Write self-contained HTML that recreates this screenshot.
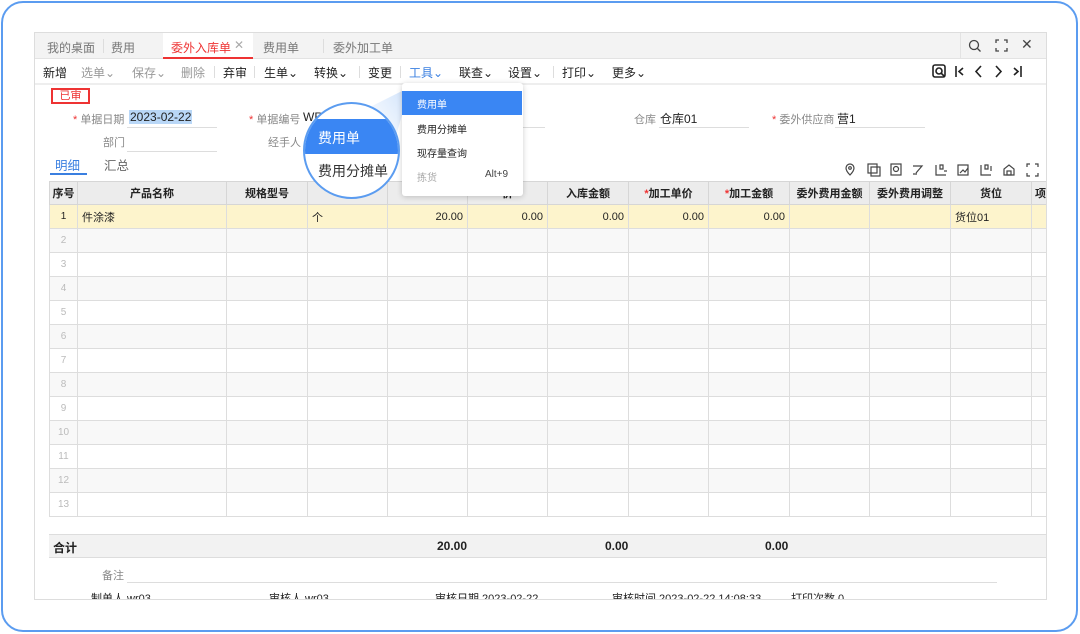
<!DOCTYPE html>
<html><head><meta charset="utf-8"><style>
*{margin:0;padding:0;box-sizing:border-box}
body{width:1080px;height:634px;background:#fff;font-family:"Liberation Sans","Noto Sans CJK SC",sans-serif;font-size:12px;color:#222;position:relative;overflow:hidden}
.a{position:absolute;white-space:nowrap}
.frame{position:absolute;left:1px;top:1px;width:1077px;height:631px;border:2px solid #5b9cf0;border-radius:22px}
.panel{position:absolute;left:34px;top:32px;width:1013px;height:568px;border:1px solid #ddd;background:#fff;overflow:hidden}
.g{color:#999}
.lbl{color:#888;font-size:11px}
.line{position:absolute;height:1px;background:#ddd}
table{border-collapse:collapse;position:absolute;left:14px;top:148px;table-layout:fixed;width:1000px}
td{border:1px solid #ddd;height:24px;font-size:11px;padding:0 4px;overflow:hidden;white-space:nowrap}
tr.h td{background:#ececec;font-weight:bold;text-align:center;height:23px;border-color:#d6d6d6}
tr.y td{background:#fdf4cc}
td.n{text-align:center;color:#bbb;font-size:10px}
td.r{text-align:right}
tr.e td{background:#f8f8f8}
.red{color:#e33}
</style></head><body>
<div class="frame"></div>
<div class="panel">
 <div class="a" style="left:0;top:0;width:1013px;height:26px;background:#f3f3f3;border-bottom:1px solid #e3e3e3"></div>
 <div class="a" style="left:12px;top:6px;color:#777">我的桌面</div>
 <div class="a" style="left:68px;top:6px;width:1px;height:14px;background:#ddd"></div>
 <div class="a" style="left:76px;top:6px;color:#777">费用</div>
 <div class="a" style="left:128px;top:0;width:90px;height:26px;background:#fff;border-bottom:2px solid #e33"></div>
 <div class="a" style="left:136px;top:6px;color:#e33">委外入库单</div>
 <div class="a" style="left:199px;top:5px;color:#aaa">✕</div>
 <div class="a" style="left:228px;top:6px;color:#777">费用单</div>
 <div class="a" style="left:288px;top:6px;width:1px;height:14px;background:#ddd"></div>
 <div class="a" style="left:298px;top:6px;color:#777">委外加工单</div>
 <div class="a" style="left:925px;top:0;width:1px;height:26px;background:#e3e3e3"></div>
 <svg class="a" style="left:933px;top:6px" width="14" height="14"><circle cx="6" cy="6" r="4.5" fill="none" stroke="#444" stroke-width="1.3"/><line x1="9.5" y1="9.5" x2="12.5" y2="12.5" stroke="#444" stroke-width="1.3"/></svg>
 <svg class="a" style="left:960px;top:6px" width="13" height="13" fill="none" stroke="#444" stroke-width="1.3"><path d="M1 4V1h3M9 1h3v3M12 9v3H9M4 12H1V9"/></svg>
 <div class="a" style="left:986px;top:3px;font-size:14px;color:#444">✕</div>
 <div class="a" style="left:0;top:26px;width:1013px;height:26px;border-bottom:2px solid #eee"></div>
 <div class="a" style="left:8px;top:31px">新增</div>
 <div class="a g" style="left:46px;top:31px">选单⌄</div>
 <div class="a g" style="left:97px;top:31px">保存⌄</div>
 <div class="a g" style="left:146px;top:31px">删除</div>
 <div class="a" style="left:179px;top:33px;width:1px;height:12px;background:#ddd"></div>
 <div class="a" style="left:188px;top:31px">弃审</div>
 <div class="a" style="left:219px;top:33px;width:1px;height:12px;background:#ddd"></div>
 <div class="a" style="left:229px;top:31px">生单⌄</div>
 <div class="a" style="left:279px;top:31px">转换⌄</div>
 <div class="a" style="left:324px;top:33px;width:1px;height:12px;background:#ddd"></div>
 <div class="a" style="left:333px;top:31px">变更</div>
 <div class="a" style="left:365px;top:33px;width:1px;height:12px;background:#ddd"></div>
 <div class="a" style="left:374px;top:31px;color:#3a7fe0">工具⌄</div>
 <div class="a" style="left:424px;top:31px">联查⌄</div>
 <div class="a" style="left:473px;top:31px">设置⌄</div>
 <div class="a" style="left:518px;top:33px;width:1px;height:12px;background:#ddd"></div>
 <div class="a" style="left:527px;top:31px">打印⌄</div>
 <div class="a" style="left:577px;top:31px">更多⌄</div>
 <svg class="a" style="left:897px;top:31px" width="95" height="16" fill="none" stroke="#222" stroke-width="1.6"><rect x="1" y="1" width="12" height="12" rx="2"/><circle cx="7" cy="7" r="3"/><path d="M9 9l4 4"/><path d="M24 2v11M31 4l-4 3.5 4 3.5"/><path d="M49 2l-5 5.5 5 5.5"/><path d="M64 2l5 5.5-5 5.5"/><path d="M82 4l4 3.5-4 3.5M89 2v11"/></svg>
 <div class="a" style="left:16px;top:55px;width:39px;height:16px;border:2px solid #e33;color:#e33;font-size:11px;text-align:center;line-height:12px">已审</div>
 <div class="a lbl" style="left:38px;top:78px"><span class="red">*</span> 单据日期</div>
 <div class="a" style="left:94px;top:77px;background:#b9d7f7;padding:0 1px">2023-02-22</div>
 <div class="line" style="left:92px;top:94px;width:90px"></div>
 <div class="a lbl" style="left:214px;top:78px"><span class="red">*</span> 单据编号</div>
 <div class="a" style="left:268px;top:77px">WR</div>
 <div class="a lbl" style="left:599px;top:78px">仓库</div>
 <div class="a" style="left:625px;top:77px">仓库01</div>
 <div class="line" style="left:624px;top:94px;width:90px"></div>
 <div class="line" style="left:420px;top:94px;width:90px"></div>
 <div class="a lbl" style="left:737px;top:78px"><span class="red">*</span> 委外供应商</div>
 <div class="a" style="left:802px;top:77px">营1</div>
 <div class="line" style="left:800px;top:94px;width:90px"></div>
 <div class="a lbl" style="left:68px;top:101px">部门</div>
 <div class="line" style="left:92px;top:118px;width:90px"></div>
 <div class="a lbl" style="left:233px;top:101px">经手人</div>
 <div class="a" style="left:20px;top:122px;color:#3a7fe0;font-size:12.5px">明细</div>
 <div class="a" style="left:69px;top:122px;color:#666;font-size:12.5px">汇总</div>
 <div class="a" style="left:15px;top:140px;width:37px;height:2px;background:#3a7fe0"></div>
 <svg class="a" style="left:808px;top:130px" width="200" height="14" fill="none" stroke="#444" stroke-width="1.2"><path d="M7 12C3 8 3 6 3 5a4 4 0 018 0c0 1 0 3-4 7z"/><circle cx="7" cy="5" r="1.3"/><rect x="25" y="1" width="9" height="9"/><rect x="28" y="4" width="9" height="9"/><rect x="48" y="1" width="10" height="11"/><circle cx="53" cy="6" r="2.5"/><path d="M70 3h9l-6 7M70 11h4"/><path d="M93 2v10h10M97 2h3v4h-3zM101 8h3"/><rect x="115" y="2" width="10" height="10"/><path d="M117 10l3-3 2 2 3-4"/><path d="M138 2v10h10M142 2h3v4h-3zM148 3v5"/><path d="M161 12V6l5-4 5 4v6z"/><rect x="164" y="8" width="4" height="4"/><path d="M184 4V1h3M192 1h3v3M195 10v3h-3M187 13h-3v-3"/></svg>
 <table>
  <colgroup><col style="width:28px"><col style="width:149px"><col style="width:81px"><col style="width:80px"><col style="width:80px"><col style="width:80px"><col style="width:81px"><col style="width:80px"><col style="width:81px"><col style="width:80px"><col style="width:81px"><col style="width:81px"><col style="width:18px"></colgroup>
  <tr class="h"><td style="padding:0">序号</td><td>产品名称</td><td>规格型号</td><td>单</td><td></td><td>价</td><td>入库金额</td><td><span class="red">*</span>加工单价</td><td><span class="red">*</span>加工金额</td><td>委外费用金额</td><td>委外费用调整</td><td>货位</td><td style="padding:0">项</td></tr>
  <tr class="y"><td style="text-align:center;font-size:10px">1</td><td>件涂漆</td><td></td><td>个</td><td class="r">20.00</td><td class="r">0.00</td><td class="r">0.00</td><td class="r">0.00</td><td class="r">0.00</td><td></td><td></td><td>货位01</td><td></td></tr>
  <tr class="e"><td class="n">2</td><td></td><td></td><td></td><td></td><td></td><td></td><td></td><td></td><td></td><td></td><td></td><td></td></tr>
  <tr><td class="n">3</td><td></td><td></td><td></td><td></td><td></td><td></td><td></td><td></td><td></td><td></td><td></td><td></td></tr>
  <tr class="e"><td class="n">4</td><td></td><td></td><td></td><td></td><td></td><td></td><td></td><td></td><td></td><td></td><td></td><td></td></tr>
  <tr><td class="n">5</td><td></td><td></td><td></td><td></td><td></td><td></td><td></td><td></td><td></td><td></td><td></td><td></td></tr>
  <tr class="e"><td class="n">6</td><td></td><td></td><td></td><td></td><td></td><td></td><td></td><td></td><td></td><td></td><td></td><td></td></tr>
  <tr><td class="n">7</td><td></td><td></td><td></td><td></td><td></td><td></td><td></td><td></td><td></td><td></td><td></td><td></td></tr>
  <tr class="e"><td class="n">8</td><td></td><td></td><td></td><td></td><td></td><td></td><td></td><td></td><td></td><td></td><td></td><td></td></tr>
  <tr><td class="n">9</td><td></td><td></td><td></td><td></td><td></td><td></td><td></td><td></td><td></td><td></td><td></td><td></td></tr>
  <tr class="e"><td class="n">10</td><td></td><td></td><td></td><td></td><td></td><td></td><td></td><td></td><td></td><td></td><td></td><td></td></tr>
  <tr><td class="n">11</td><td></td><td></td><td></td><td></td><td></td><td></td><td></td><td></td><td></td><td></td><td></td><td></td></tr>
  <tr class="e"><td class="n">12</td><td></td><td></td><td></td><td></td><td></td><td></td><td></td><td></td><td></td><td></td><td></td><td></td></tr>
  <tr><td class="n">13</td><td></td><td></td><td></td><td></td><td></td><td></td><td></td><td></td><td></td><td></td><td></td><td></td></tr>
 </table>
 <div class="a" style="left:14px;top:501px;width:1000px;height:24px;background:#f2f2f2;border-top:1px solid #ddd;border-bottom:1px solid #ddd"></div>
 <div class="a" style="left:18px;top:506px;font-weight:bold">合计</div>
 <div class="a" style="left:402px;top:506px;font-weight:bold">20.00</div>
 <div class="a" style="left:570px;top:506px;font-weight:bold">0.00</div>
 <div class="a" style="left:730px;top:506px;font-weight:bold">0.00</div>
 <div class="a lbl" style="left:67px;top:534px">备注</div>
 <div class="line" style="left:92px;top:549px;width:870px"></div>
 <div class="a" style="left:56px;top:557px;font-size:11px">制单人 wr03</div>
 <div class="a" style="left:234px;top:557px;font-size:11px">审核人 wr03</div>
 <div class="a" style="left:400px;top:557px;font-size:11px">审核日期 2023-02-22</div>
 <div class="a" style="left:577px;top:557px;font-size:11px">审核时间 2023-02-22 14:08:33</div>
 <div class="a" style="left:756px;top:557px;font-size:11px">打印次数 0</div>
</div>
<svg class="a" style="left:0;top:0" width="1080" height="634"><defs><linearGradient id="w" x1="1" y1="0" x2="0" y2="1"><stop offset="0" stop-color="#cfe2fb" stop-opacity=".9"/><stop offset="1" stop-color="#e8f1fd" stop-opacity=".3"/></linearGradient></defs><polygon points="372,106 402,91 402,115 396,136" fill="url(#w)"/></svg>
<div class="a" style="left:402px;top:83px;width:121px;height:113px;background:#fff;border-radius:3px;box-shadow:0 1px 6px rgba(0,0,0,.2)"></div>
<div class="a" style="left:402px;top:91px;width:120px;height:24px;background:#3a86f3"></div>
<div class="a" style="left:417px;top:96px;color:#fff;font-size:10px">费用单</div>
<div class="a" style="left:417px;top:121px;font-size:10px">费用分摊单</div>
<div class="a" style="left:417px;top:145px;font-size:10px">现存量查询</div>
<div class="a" style="left:417px;top:169px;font-size:10px;color:#aaa">拣货</div>
<div class="a" style="left:485px;top:169px;font-size:10px;color:#444">Alt+9</div>
<div class="a" style="left:303px;top:102px;width:97px;height:97px;border-radius:50%;border:2px solid #5b9cf0;background:#fff;overflow:hidden">
 <div class="a" style="left:0;top:15px;width:100px;height:35px;background:#3a86f3"></div>
 <div class="a" style="left:13px;top:24px;color:#fff;font-size:14px">费用单</div>
 <div class="a" style="left:13px;top:57px;color:#333;font-size:14px">费用分摊单</div>
</div>
</body></html>
